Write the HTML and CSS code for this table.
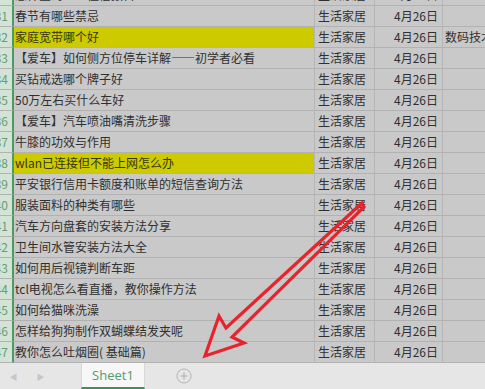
FILE: index.html
```html
<!DOCTYPE html>
<html lang="zh">
<head>
<meta charset="utf-8">
<title>Sheet1</title>
<link rel="stylesheet" href="styles.css">
</head>
<body>
<div class="app">
  <div class="sheet">
    <div class="rows">
      <div class="row first"><div class="hd">30</div><div class="ca">怎样查询个人征信报告</div><div class="cb">生活家居</div><div class="cc">4月26日</div><div class="cd"></div></div>
      <div class="row"><div class="hd">31</div><div class="ca">春节有哪些禁忌</div><div class="cb">生活家居</div><div class="cc">4月26日</div><div class="cd"></div></div>
      <div class="row"><div class="hd">32</div><div class="ca hl">家庭宽带哪个好</div><div class="cb">生活家居</div><div class="cc">4月26日</div><div class="cd">数码技术</div></div>
      <div class="row"><div class="hd">33</div><div class="ca">【爱车】如何侧方位停车详解——初学者必看</div><div class="cb">生活家居</div><div class="cc">4月26日</div><div class="cd"></div></div>
      <div class="row"><div class="hd">34</div><div class="ca">买钻戒选哪个牌子好</div><div class="cb">生活家居</div><div class="cc">4月26日</div><div class="cd"></div></div>
      <div class="row"><div class="hd">35</div><div class="ca">50万左右买什么车好</div><div class="cb">生活家居</div><div class="cc">4月26日</div><div class="cd"></div></div>
      <div class="row"><div class="hd">36</div><div class="ca">【爱车】汽车喷油嘴清洗步骤</div><div class="cb">生活家居</div><div class="cc">4月26日</div><div class="cd"></div></div>
      <div class="row"><div class="hd">37</div><div class="ca">牛膝的功效与作用</div><div class="cb">生活家居</div><div class="cc">4月26日</div><div class="cd"></div></div>
      <div class="row"><div class="hd">38</div><div class="ca hl">wlan已连接但不能上网怎么办</div><div class="cb">生活家居</div><div class="cc">4月26日</div><div class="cd"></div></div>
      <div class="row"><div class="hd">39</div><div class="ca">平安银行信用卡额度和账单的短信查询方法</div><div class="cb">生活家居</div><div class="cc">4月26日</div><div class="cd"></div></div>
      <div class="row"><div class="hd">40</div><div class="ca">服装面料的种类有哪些</div><div class="cb">生活家居</div><div class="cc">4月26日</div><div class="cd"></div></div>
      <div class="row"><div class="hd">41</div><div class="ca">汽车方向盘套的安装方法分享</div><div class="cb">生活家居</div><div class="cc">4月26日</div><div class="cd"></div></div>
      <div class="row"><div class="hd">42</div><div class="ca">卫生间水管安装方法大全</div><div class="cb">生活家居</div><div class="cc">4月26日</div><div class="cd"></div></div>
      <div class="row"><div class="hd">43</div><div class="ca">如何用后视镜判断车距</div><div class="cb">生活家居</div><div class="cc">4月26日</div><div class="cd"></div></div>
      <div class="row"><div class="hd">44</div><div class="ca">tcl电视怎么看直播，教你操作方法</div><div class="cb">生活家居</div><div class="cc">4月26日</div><div class="cd"></div></div>
      <div class="row"><div class="hd">45</div><div class="ca">如何给猫咪洗澡</div><div class="cb">生活家居</div><div class="cc">4月26日</div><div class="cd"></div></div>
      <div class="row"><div class="hd">46</div><div class="ca">怎样给狗狗制作双蝴蝶结发夹呢</div><div class="cb">生活家居</div><div class="cc">4月26日</div><div class="cd"></div></div>
      <div class="row"><div class="hd">47</div><div class="ca">教你怎么吐烟圈( 基础篇)</div><div class="cb">生活家居</div><div class="cc">4月26日</div><div class="cd"></div></div>
    </div>
  </div>
  <div class="tabbar">
    <span class="nav">&#9664;</span>
    <span class="nav">&#9654;</span>
    <div class="tab">Sheet1</div>
    <svg class="add" width="16" height="16" viewBox="0 0 16 16"><circle cx="8" cy="8" r="7" fill="none" stroke="#b4b4b4" stroke-width="1"/><path d="M8 4.5v7M4.5 8h7" stroke="#b4b4b4" stroke-width="1.2"/></svg>
  </div>
  <svg class="arrow" width="485" height="389" viewBox="0 0 485 389">
    <path d="M362 203 L226 328 L219 316 L205 356 L244 343 L232 337 L364 207 Z" fill="none" stroke="#e8232b" stroke-width="3.2" stroke-linejoin="miter"/>
  </svg>
</div>
</body>
</html>
```

FILE: styles.css
```css
* { box-sizing: border-box; }
html, body {
  margin: 0;
  padding: 0;
  width: 485px;
  height: 389px;
  overflow: hidden;
  background: #e6e6e6;
}
.app {
  position: relative;
  width: 485px;
  height: 389px;
  display: flex;
  flex-direction: column;
  font-family: "Noto Sans CJK SC", "Noto Sans", sans-serif;
}
.sheet {
  height: 363px;
  overflow: hidden;
  background: #c9c9c9;
}
.rows {
  margin-top: -15px;
}
.row {
  display: grid;
  grid-template-columns: 14px 301px 60px 68px 1fr;
  height: 21px;
}
.row > div {
  border-bottom: 1px solid #b2b2b2;
  font-size: 12px;
  line-height: 20px;
  white-space: nowrap;
  overflow: hidden;
  color: #303030;
}
.hd {
  background: #d3e4d6;
  border-right: 2px solid #4f9a62;
  color: #6a9a76 !important;
  text-align: right;
  padding-right: 4px;
  direction: rtl;
}
.ca {
  padding-left: 1px;
  border-right: 1px solid #b6b6b6;
}
.ca.hl {
  background: #cdcb00;
  color: #36360e !important;
}
.cb {
  padding-left: 3px;
  border-right: 1px solid #b6b6b6;
}
.cc {
  text-align: right;
  padding-right: 4px;
  border-right: 1px solid #b6b6b6;
}
.cd {
  padding-left: 2px;
  overflow: visible !important;
}
.tabbar {
  flex: 1;
  display: flex;
  align-items: center;
  background: #e6e6e6;
}
.nav {
  font-size: 8px;
  color: #c6c6c6;
  width: 13px;
  text-align: center;
}
.nav:first-child { margin-left: 7px; }
.nav + .nav { margin-left: 14px; }
.tab {
  margin-left: 34px;
  width: 64px;
  height: 26px;
  align-self: flex-start;
  background: #f7f7f7;
  border-left: 1px solid #d8d8d8;
  border-right: 1px solid #d8d8d8;
  border-bottom: 2px solid #3e8f5a;
  color: #4f9c6c;
  font-family: "Open Sans", "Noto Sans", sans-serif;
  font-size: 13px;
  line-height: 24px;
  text-align: center;
}
.add {
  margin-left: 31px;
}
.arrow {
  position: absolute;
  left: 0;
  top: 0;
  pointer-events: none;
}
```
